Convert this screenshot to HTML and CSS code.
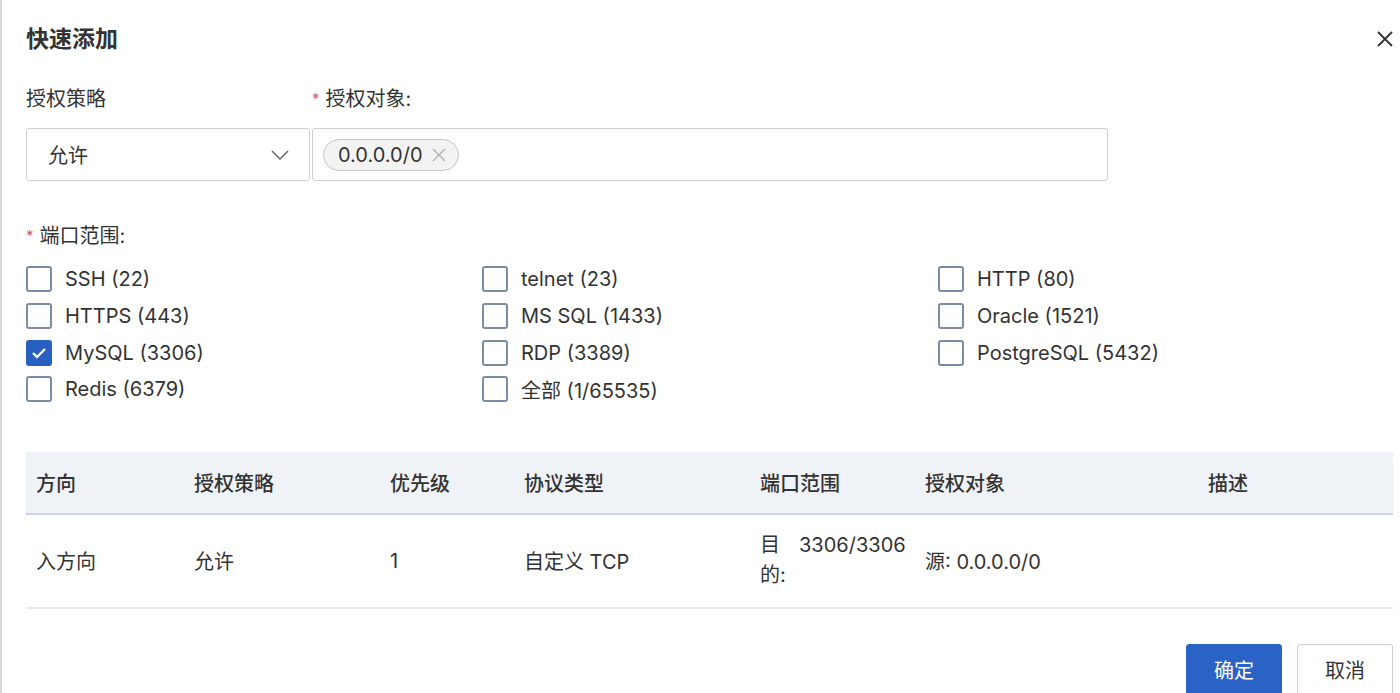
FILE: index.html
```html
<!DOCTYPE html>
<html lang="zh-CN">
<head>
    <meta charset="UTF-8">
    <meta name="viewport" content="width=device-width, initial-scale=1.0">
    <title>快速添加</title>
    <link rel="stylesheet" href="styles.css">
</head>
<body>
    <div class="dialog">
        <div class="dialog-header">
            <h2 class="title">快速添加</h2>
            <span class="close">
                <svg width="16" height="16" viewBox="0 0 16 16"><path d="M1 1L15 15M15 1L1 15" stroke="#333" stroke-width="1.8" fill="none"/></svg>
            </span>
        </div>

        <div class="form-row">
            <div class="field field-policy">
                <label class="label">授权策略</label>
                <div class="select">
                    <span>允许</span>
                    <svg width="18" height="10" viewBox="0 0 18 10"><path d="M1 1L9 9L17 1" stroke="#666" stroke-width="1.5" fill="none"/></svg>
                </div>
            </div>
            <div class="field field-target">
                <label class="label"><span class="req">*</span>授权对象:</label>
                <div class="tag-input">
                    <span class="tag">0.0.0.0/0<span class="tag-x">
                        <svg width="14" height="14" viewBox="0 0 14 14"><path d="M1 1L13 13M13 1L1 13" stroke="#b0b0b0" stroke-width="1.4" fill="none"/></svg>
                    </span></span>
                </div>
            </div>
        </div>

        <label class="label label-ports"><span class="req">*</span>端口范围:</label>
        <div class="ports">
            <label class="check"><span class="box"></span>SSH (22)</label>
            <label class="check"><span class="box"></span>telnet (23)</label>
            <label class="check"><span class="box"></span>HTTP (80)</label>
            <label class="check"><span class="box"></span>HTTPS (443)</label>
            <label class="check"><span class="box"></span>MS SQL (1433)</label>
            <label class="check"><span class="box"></span>Oracle (1521)</label>
            <label class="check"><span class="box checked">
                <svg width="16" height="12" viewBox="0 0 16 12"><path d="M2 6L6 10L14 2" stroke="#fff" stroke-width="2.4" fill="none"/></svg>
            </span>MySQL (3306)</label>
            <label class="check"><span class="box"></span>RDP (3389)</label>
            <label class="check"><span class="box"></span>PostgreSQL (5432)</label>
            <label class="check"><span class="box"></span>Redis (6379)</label>
            <label class="check"><span class="box"></span>全部 (1/65535)</label>
        </div>

        <table class="rules">
            <thead>
                <tr>
                    <th class="c-dir">方向</th>
                    <th class="c-policy">授权策略</th>
                    <th class="c-prio">优先级</th>
                    <th class="c-proto">协议类型</th>
                    <th class="c-port">端口范围</th>
                    <th class="c-target">授权对象</th>
                    <th class="c-desc">描述</th>
                </tr>
            </thead>
            <tbody>
                <tr>
                    <td>入方向</td>
                    <td>允许</td>
                    <td>1</td>
                    <td>自定义 TCP</td>
                    <td>
                        <div class="port-cell"><span class="port-key">目的:</span><span>3306/3306</span></div>
                    </td>
                    <td>源: 0.0.0.0/0</td>
                    <td></td>
                </tr>
            </tbody>
        </table>

        <div class="footer">
            <button class="btn btn-primary">确定</button>
            <button class="btn">取消</button>
        </div>
    </div>
</body>
</html>
```

FILE: styles.css
```css
html, body { margin: 0; overflow: hidden; background: #fff; }
body { font-family: Inter, "Noto Sans CJK SC", sans-serif; color: #333; font-size: 20px; }

.dialog {
    border-left: 2px solid #d6d6d6;
    min-height: 693px;
    padding: 24px 7px 0 24px;
    box-sizing: border-box;
}

.dialog-header { display: flex; justify-content: space-between; align-items: center; height: 30px; }
.title { margin: 0; font-size: 23px; font-weight: 600; line-height: 30px; }
.close { display: flex; }

.label { display: block; line-height: 28px; font-size: 20px; }
.req { color: #e0585b; font-size: 15px; margin-right: 6px; vertical-align: 2px; }

.form-row { display: flex; gap: 2px; margin-top: 31px; }
.field .label { margin-bottom: 15px; }
.field-policy { width: 284px; }
.field-target { width: 796px; }

.select, .tag-input {
    height: 53px;
    border: 1px solid #cfcfcf;
    border-radius: 3px;
    box-sizing: border-box;
    display: flex;
    align-items: center;
}
.select { justify-content: space-between; padding: 0 20px 0 21px; }
.tag-input { padding-left: 10px; }

.tag {
    display: inline-flex;
    align-items: center;
    height: 32px;
    padding: 0 12px 0 14px;
    border: 1px solid #c8c8c8;
    border-radius: 16px;
    background: #f3f3f3;
    box-sizing: border-box;
    gap: 9px;
}
.tag-x { display: flex; }

.label-ports { margin-top: 41px; }

.ports {
    display: grid;
    grid-template-columns: repeat(3, 456px);
    margin-top: 11px;
}
.check { display: flex; align-items: center; height: 36.7px; gap: 13px; }
.box {
    width: 26px;
    height: 26px;
    border: 2px solid #7d8ca6;
    border-radius: 3px;
    box-sizing: border-box;
    display: flex;
    align-items: center;
    justify-content: center;
}
.box.checked { background: #2860c2; border-color: #2860c2; }

.rules {
    margin-top: 44px;
    width: 100%;
    border-collapse: collapse;
    table-layout: fixed;
}
.rules th, .rules td { text-align: left; padding: 0 10px; font-size: 20px; }
.rules th { background: #eff2f7; height: 61px; font-weight: 500; border-bottom: 2px solid #cfd3dc; }
.rules td { height: 92px; border-bottom: 2px solid #ececec; }
.c-dir { width: 138px; }
.c-policy { width: 176px; }
.c-prio { width: 114px; }
.c-proto { width: 216px; }
.c-port { width: 145px; }
.c-target { width: 263px; }

.port-cell { display: flex; gap: 19px; line-height: 30px; margin-top: -1px; }
.port-key { width: 20px; }

.footer { display: flex; justify-content: flex-end; gap: 15px; margin-top: 35px; }
.btn {
    width: 96px;
    height: 52px;
    font-family: inherit;
    font-size: 20px;
    color: #333;
    background: #fff;
    border: 1px solid #cfcfcf;
    border-radius: 3px;
}
.btn-primary { background: #2a62c5; border-color: #2a62c5; color: #fff; }
```
